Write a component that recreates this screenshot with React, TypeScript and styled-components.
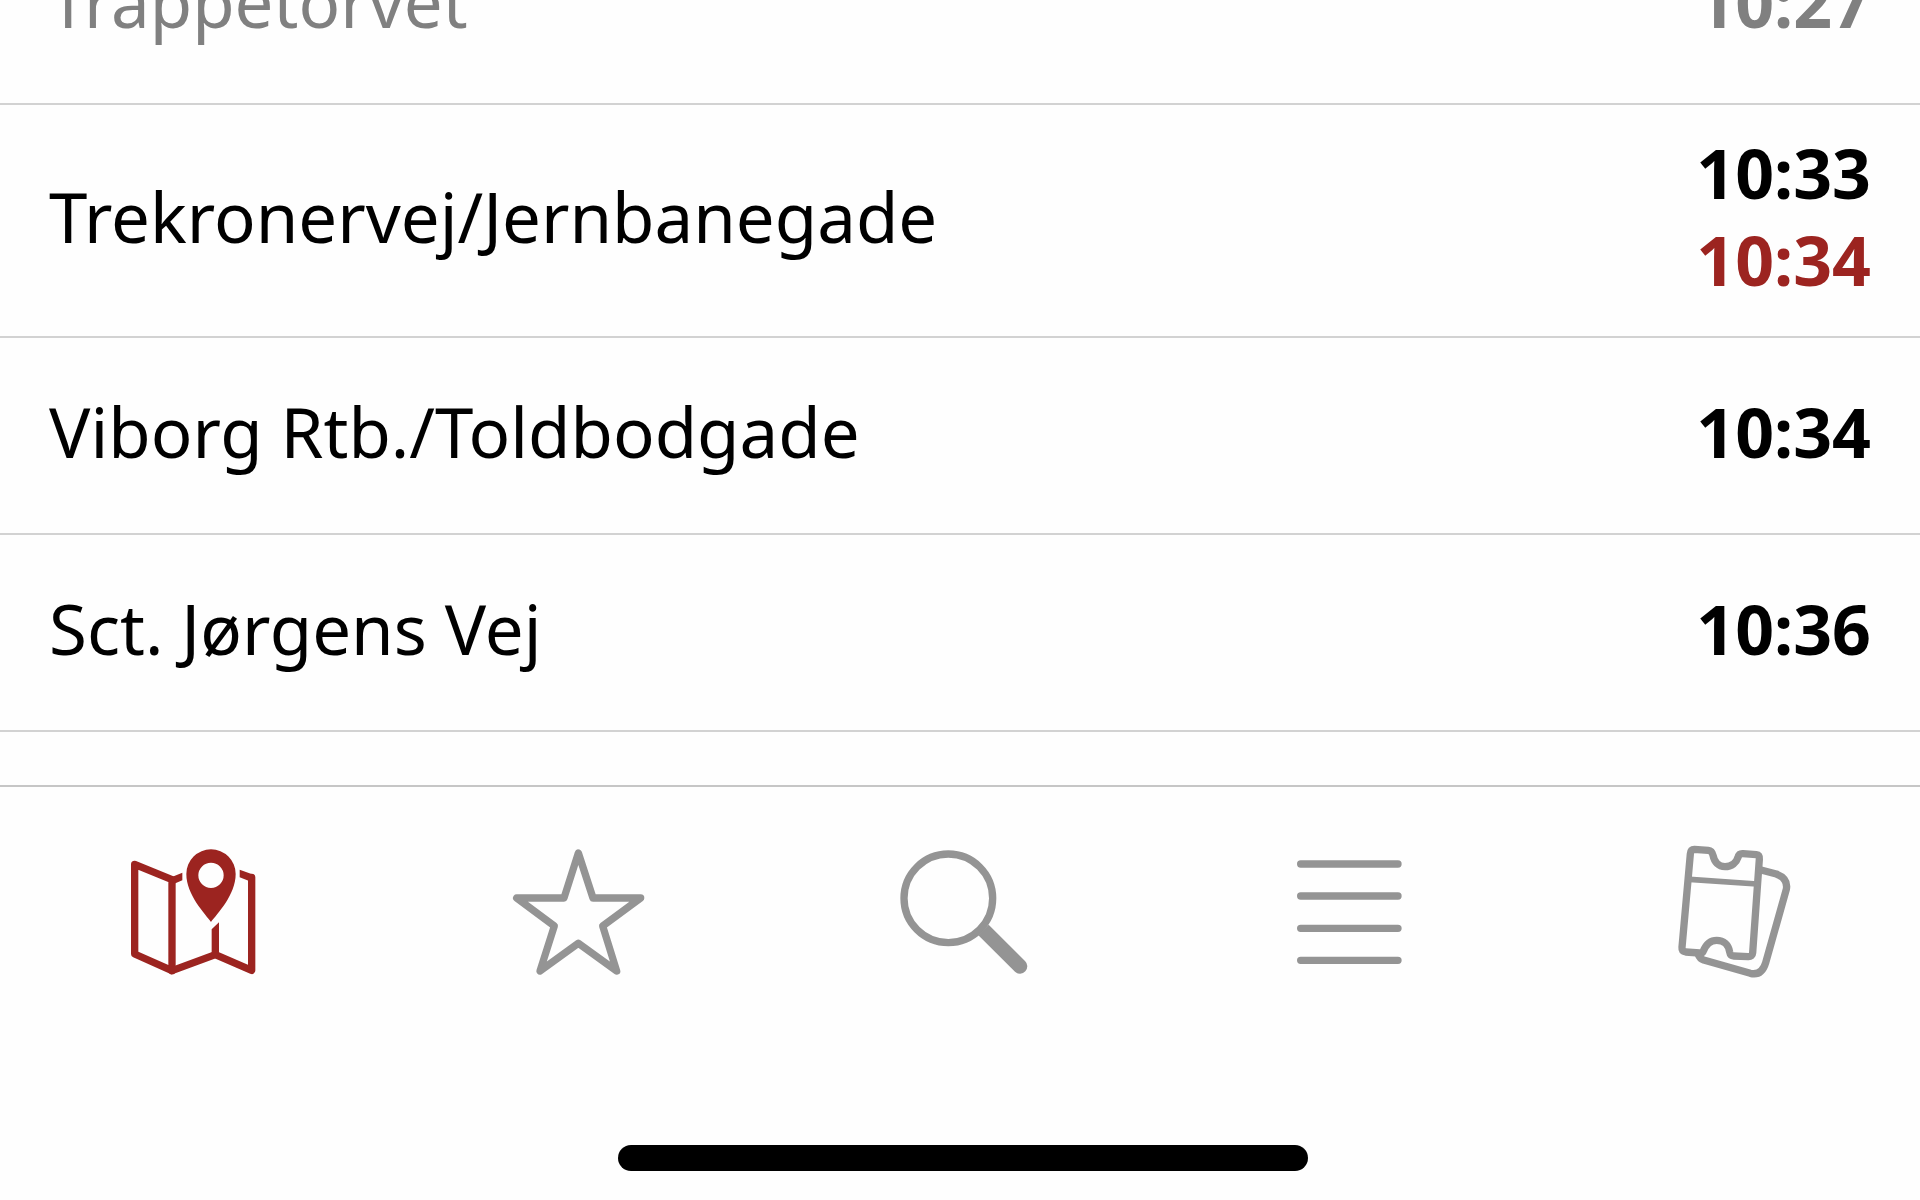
import React from "react";
import styled, { createGlobalStyle } from "styled-components";

const red = "#9c2420";
const gray = "#949494";

const GlobalStyle = createGlobalStyle`
  *, *::before, *::after { box-sizing: border-box; }
  body {
    margin: 0;
    background: #fefefe;
    color: #000;
    font-family: "Noto Sans", "Open Sans", sans-serif;
  }
`;

const Screen = styled.div`
  display: flex;
  flex-direction: column;
  height: 100vh;
  overflow: hidden;
`;

const StopPane = styled.main`
  flex: 1;
  min-height: 0;
  overflow: hidden;
`;

/* The list is scrolled so that its first stop is cut by the top edge. */
const StopList = styled.ul`
  margin: -92px 0 0;
  padding: 0;
  list-style: none;
`;

const StopRow = styled.li<{ $passed?: boolean }>`
  display: flex;
  align-items: center;
  justify-content: space-between;
  min-height: 197px;
  padding: 24px 49px 33px;
  border-bottom: 2px solid #d2d2d2;
  color: ${(p) => (p.$passed ? "#808080" : "#000")};
  font-size: 69px;
  line-height: 87px;
  white-space: nowrap;
`;

const Times = styled.div`
  display: flex;
  flex-direction: column;
  align-items: flex-end;
  font-size: 68px;
  font-weight: 700;
`;

const Time = styled.time<{ $late?: boolean }>`
  color: ${(p) => (p.$late ? red : "inherit")};
`;

const Footer = styled.footer`
  margin-right: -6px;
  padding-bottom: 29px;
  border-top: 2px solid #c6c6c6;
`;

const TabBar = styled.nav`
  display: grid;
  grid-template-columns: repeat(5, 1fr);
  padding: 55px 0 163px;
`;

const Tab = styled.button<{ $active?: boolean }>`
  display: flex;
  justify-content: center;
  padding: 0;
  border: 0;
  background: none;
  color: ${(p) => (p.$active ? red : gray)};
  cursor: pointer;
`;

const Icon = styled.svg`
  display: block;
  width: 140px;
  height: 140px;
  fill: none;
  stroke: currentColor;
  stroke-width: 22;
  stroke-linecap: round;
  stroke-linejoin: round;
`;

const ThinStroke = styled.path`
  stroke-width: 17;
`;

const HomeIndicator = styled.div`
  width: 690px;
  height: 26px;
  margin: 0 auto;
  border-radius: 13px;
  background: #000;
`;

const MapIcon = () => (
  <Icon viewBox="38 36 420 420" aria-hidden="true">
    <path d="M73 103 L185 149 V422 L73 372 Z" />
    <path d="M185 422 L315 374 L424 421 V142" />
    <g fill="currentColor" stroke="none">
      <path d="M180 140 L190 139 L216 128 V151 L190 162 Z" />
      <path d="M388 119 L430 134 L424 156 L388 142 Z" />
      <path d="M304 298 L326 277 V378 H304 Z" />
      <path
        fillRule="evenodd"
        d="M302 276 C285 252 228 195 228 132 A74 74 0 0 1 376 132 C376 195 320 252 302 276 Z M302 98 A38 38 0 1 0 302 174 A38 38 0 1 0 302 98 Z"
      />
    </g>
  </Icon>
);

const StarIcon = () => (
  <Icon viewBox="23 36 420 420" aria-hidden="true">
    <path d="M234 69 L278 204 H421 L307 288 L349 423 L234 340 L119 423 L162 288 L49 204 H191 Z" />
  </Icon>
);

const SearchIcon = () => (
  <Icon viewBox="39 36 420 420" aria-hidden="true">
    <circle cx="205" cy="205" r="133" />
    <path
      fill="currentColor"
      stroke="none"
      d="M295 316 L326 284 L435 393 A21 21 0 0 1 405 425 Z"
    />
  </Icon>
);

const ListIcon = () => (
  <Icon viewBox="-5 6 420 420" aria-hidden="true">
    <path d="M63 72 H355 M63 168 H355 M63 265 H355 M63 361 H355" />
  </Icon>
);

const TicketIcon = () => (
  <Icon viewBox="10 36 420 420" aria-hidden="true">
    <path d="M104 58 L146 61 Q157 62 160 76 C164 96 176 110 196 110 C216 110 230 98 235 82 Q238 70 250 71 L290 74 Q300 75 299 88 L279 368 Q278 381 265 380 L222 378 Q212 378 210 366 C207 344 192 331 171 331 C150 331 138 346 131 363 Q129 370 120 369 L78 366 Q66 364 67 352 L92 72 Q93 58 104 58 Z" />
    <ThinStroke d="M90 148 L292 162" />
    <path d="M304 120 L350 132 Q386 146 380 178 L318 398 Q306 438 272 430 L132 390 Q120 386 116 374" />
  </Icon>
);

const stops = [
  { name: "Trappetorvet", time: "10:27", passed: true },
  { name: "Trekronervej/Jernbanegade", time: "10:33", expected: "10:34" },
  { name: "Viborg Rtb./Toldbodgade", time: "10:34" },
  { name: "Sct. Jørgens Vej", time: "10:36" },
];

const tabs = [
  { label: "Map", Glyph: MapIcon, active: true },
  { label: "Favourites", Glyph: StarIcon },
  { label: "Search", Glyph: SearchIcon },
  { label: "Departures", Glyph: ListIcon },
  { label: "Tickets", Glyph: TicketIcon },
];

export default function App() {
  return (
    <>
      <GlobalStyle />
      <Screen>
        <StopPane>
          <StopList>
            {stops.map((stop) => (
              <StopRow key={stop.name} $passed={stop.passed}>
                <span>{stop.name}</span>
                <Times>
                  <Time>{stop.time}</Time>
                  {stop.expected && <Time $late>{stop.expected}</Time>}
                </Times>
              </StopRow>
            ))}
          </StopList>
        </StopPane>
        <Footer>
          <TabBar>
            {tabs.map(({ label, Glyph, active }) => (
              <Tab
                key={label}
                type="button"
                aria-label={label}
                aria-current={active ? "page" : undefined}
                $active={active}
              >
                <Glyph />
              </Tab>
            ))}
          </TabBar>
          <HomeIndicator />
        </Footer>
      </Screen>
    </>
  );
}
